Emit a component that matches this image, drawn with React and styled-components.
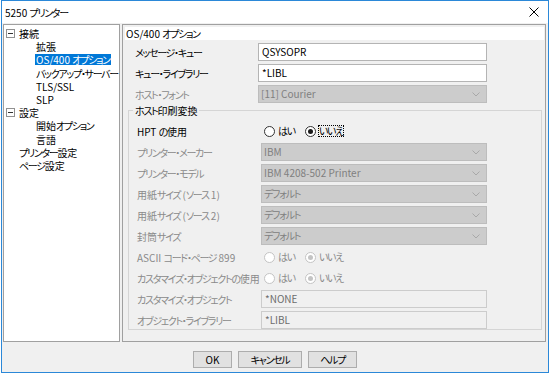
import React from "react";
import styled, { createGlobalStyle, css } from "styled-components";

const GlobalStyle = createGlobalStyle`
  html, body {
    margin: 0;
    padding: 0;
    background: #ffffff;
  }
  body {
    font-family: "Noto Sans CJK JP", "Liberation Sans", sans-serif;
    font-size: 10px;
    font-feature-settings: "palt";
    color: #000;
  }
  * {
    box-sizing: border-box;
  }
`;

const Window = styled.div`
  width: 548px;
  height: 373px;
  margin-left: 1px;
  border: 1px solid #2b88d8;
  background: #f0f0f0;
  display: flex;
  flex-direction: column;
`;

const TitleBar = styled.div`
  height: 22px;
  flex: none;
  background: #ffffff;
  display: flex;
  align-items: center;
  justify-content: space-between;
  padding: 0 9px 0 3px;
  line-height: 13px;
`;

const Main = styled.div`
  display: flex;
  gap: 2px;
  padding: 1px 2px 0 1px;
  height: 319px;
  flex: none;
`;

const Tree = styled.ul`
  list-style: none;
  margin: 0;
  padding: 2px 0 0 1px;
  width: 117px;
  height: 318px;
  background: #ffffff;
  border: 1px solid #a0a0a0;
  overflow: hidden;
`;

const TreeRow = styled.li`
  display: flex;
  align-items: center;
  height: 13.2px;
  line-height: 11px;
  padding-left: ${(p) => (p.$depth ? 30 : 0)}px;
`;

const Expander = styled.span`
  width: 13px;
  flex: none;
  display: flex;
  align-items: center;
  padding-left: 1px;
`;

const ExpanderBox = styled.span`
  width: 9px;
  height: 9px;
  border: 1px solid #919191;
  display: flex;
  align-items: center;
  justify-content: center;
  &::after {
    content: "";
    width: 5px;
    height: 1px;
    background: #333;
  }
`;

const TreeLabel = styled.span`
  line-height: 11px;
  padding: 0 1px;
  white-space: nowrap;
  ${(p) =>
    p.$selected &&
    css`
      background: #0078d7;
      color: #ffffff;
    `}
`;

const Kana = styled.span`
  letter-spacing: -1.3px;
`;

const Pane = styled.div`
  flex: 1;
  border: 1px solid #a0a0a0;
  padding: 2px 1px 0 2px;
`;

const PaneHeader = styled.div`
  height: 13px;
  background: #ffffff;
  line-height: 13px;
  padding-left: 1px;
  margin-bottom: 3px;
`;

const Form = styled.div`
  padding-left: 10px;
  display: flex;
  flex-direction: column;
  gap: 3px;
`;

const Row = styled.div`
  display: grid;
  grid-template-columns: ${(p) => (p.$inner ? "124px 226px" : "123px 229px")};
  align-items: center;
  height: 18px;
  line-height: 13px;
  color: ${(p) => (p.$disabled ? "#8a8a8a" : "#000")};
  white-space: nowrap;
`;

const TextBox = styled.div`
  height: 18px;
  border: 1px solid ${(p) => (p.$disabled ? "#cccccc" : "#b4b4b4")};
  background: ${(p) => (p.$disabled ? "#f0f0f0" : "#ffffff")};
  color: ${(p) => (p.$disabled ? "#6d6d6d" : "#000")};
  padding: 0 3px;
  line-height: 16px;
`;

const Select = styled.div`
  height: 18px;
  border: 1px solid #bdbdbd;
  background: #cccccc;
  color: #808080;
  padding: 0 6px 0 2px;
  line-height: 16px;
  display: flex;
  align-items: center;
  justify-content: space-between;
`;

const Group = styled.fieldset`
  margin: -2px 2px 0 -7px;
  padding: 5px 0 0 8px;
  border: 1px solid #d5d5d5;
  min-width: 0;
  display: flex;
  flex-direction: column;
  gap: 3px;
  & > legend {
    margin-left: -4px;
    padding: 0 2px;
    line-height: 13px;
    color: #000;
  }
`;

const RadioGroup = styled.div`
  display: flex;
  align-items: center;
  gap: 9px;
  padding-left: 3px;
`;

const RadioItem = styled.span`
  display: flex;
  align-items: center;
  gap: 2px;
  color: ${(p) => (p.$disabled ? "#8a8a8a" : "#000")};
`;

const RadioCircle = styled.span`
  width: 11px;
  height: 11px;
  border-radius: 50%;
  border: 1px solid ${(p) => (p.$disabled ? "#c4c4c4" : "#333333")};
  background: #ffffff;
  display: flex;
  align-items: center;
  justify-content: center;
  &::after {
    content: "";
    width: 5px;
    height: 5px;
    border-radius: 50%;
    background: ${(p) => (p.$disabled ? "#c4c4c4" : "#1a1a1a")};
    display: ${(p) => (p.$checked ? "block" : "none")};
  }
`;

const RadioText = styled.span`
  line-height: 12px;
  outline: ${(p) => (p.$focus ? "1px dotted #000" : "none")};
  outline-offset: -1px;
  padding: 0 1px;
`;

const Footer = styled.div`
  flex: 1;
  display: flex;
  justify-content: center;
  align-items: flex-start;
  gap: 6px;
  padding-top: 9px;
`;

const Button = styled.button`
  width: ${(p) => p.$w}px;
  height: 17px;
  border: 1px solid #adadad;
  background: #e1e1e1;
  font: inherit;
  line-height: 15px;
  padding: 0;
  color: #000;
`;

// kana runs are set tighter, the dialog font has narrow kana
const KANA = /([\u3040-\u30ff]+)/;
const Jp = ({ children }) =>
  children
    .split(KANA)
    .map((part, i) => (i % 2 ? <Kana key={i}>{part}</Kana> : part));

const Chevron = () => (
  <svg width="8" height="5" viewBox="0 0 8 5">
    <polyline points="0.5,0.5 4,4 7.5,0.5" fill="none" stroke="#a8a8a8" strokeWidth="1" />
  </svg>
);

const CloseIcon = () => (
  <svg width="10" height="10" viewBox="0 0 10 10">
    <path d="M0.5 0.5 L9.5 9.5 M9.5 0.5 L0.5 9.5" stroke="#000" strokeWidth="1" />
  </svg>
);

const Radio = ({ label, checked, disabled, focus }) => (
  <RadioItem $disabled={disabled}>
    <RadioCircle $checked={checked} $disabled={disabled} />
    <RadioText $focus={focus}>
      <Jp>{label}</Jp>
    </RadioText>
  </RadioItem>
);

const treeItems = [
  { label: "接続", expander: true },
  { label: "拡張", depth: 1 },
  { label: "OS/400 オプション", depth: 1, selected: true },
  { label: "バックアップ・サーバー", depth: 1 },
  { label: "TLS/SSL", depth: 1 },
  { label: "SLP", depth: 1 },
  { label: "設定", expander: true },
  { label: "開始オプション", depth: 1 },
  { label: "言語", depth: 1 },
  { label: "プリンター設定" },
  { label: "ページ設定" },
];

const selects = [
  ["プリンター・メーカー", "IBM"],
  ["プリンター・モデル", "IBM 4208-502 Printer"],
  ["用紙サイズ (ソース 1)", "デフォルト"],
  ["用紙サイズ (ソース 2)", "デフォルト"],
  ["封筒サイズ", "デフォルト"],
];

export default function App() {
  return (
    <>
      <GlobalStyle />
      <Window>
        <TitleBar>
          <span>
            <Jp>5250 プリンター</Jp>
          </span>
          <CloseIcon />
        </TitleBar>
        <Main>
          <Tree>
            {treeItems.map((item) => (
              <TreeRow key={item.label} $depth={item.depth}>
                {!item.depth && (
                  <Expander>{item.expander && <ExpanderBox />}</Expander>
                )}
                <TreeLabel $selected={item.selected}>
                  <Jp>{item.label}</Jp>
                </TreeLabel>
              </TreeRow>
            ))}
          </Tree>
          <Pane>
            <PaneHeader>
              <Jp>OS/400 オプション</Jp>
            </PaneHeader>
            <Form>
              <Row>
                <span><Jp>メッセージ・キュー</Jp></span>
                <TextBox>QSYSOPR</TextBox>
              </Row>
              <Row>
                <span><Jp>キュー・ライブラリー</Jp></span>
                <TextBox>*LIBL</TextBox>
              </Row>
              <Row $disabled>
                <span><Jp>ホスト・フォント</Jp></span>
                <Select>
                  <span>[11] Courier</span>
                  <Chevron />
                </Select>
              </Row>
              <Group>
                <legend><Jp>ホスト印刷変換</Jp></legend>
                <Row $inner>
                  <span><Jp>HPT の使用</Jp></span>
                  <RadioGroup>
                    <Radio label="はい" />
                    <Radio label="いいえ" checked focus />
                  </RadioGroup>
                </Row>
                {selects.map(([label, value]) => (
                  <Row $inner $disabled key={label}>
                    <span><Jp>{label}</Jp></span>
                    <Select>
                      <span><Jp>{value}</Jp></span>
                      <Chevron />
                    </Select>
                  </Row>
                ))}
                <Row $inner $disabled>
                  <span><Jp>ASCII コード・ページ 899</Jp></span>
                  <RadioGroup>
                    <Radio label="はい" disabled />
                    <Radio label="いいえ" checked disabled />
                  </RadioGroup>
                </Row>
                <Row $inner $disabled>
                  <span><Jp>カスタマイズ・オブジェクトの使用</Jp></span>
                  <RadioGroup>
                    <Radio label="はい" disabled />
                    <Radio label="いいえ" checked disabled />
                  </RadioGroup>
                </Row>
                <Row $inner $disabled>
                  <span><Jp>カスタマイズ・オブジェクト</Jp></span>
                  <TextBox $disabled>*NONE</TextBox>
                </Row>
                <Row $inner $disabled>
                  <span><Jp>オブジェクト・ライブラリー</Jp></span>
                  <TextBox $disabled>*LIBL</TextBox>
                </Row>
              </Group>
            </Form>
          </Pane>
        </Main>
        <Footer>
          <Button $w={39}>OK</Button>
          <Button $w={64}><Jp>キャンセル</Jp></Button>
          <Button $w={49}><Jp>ヘルプ</Jp></Button>
        </Footer>
      </Window>
    </>
  );
}
